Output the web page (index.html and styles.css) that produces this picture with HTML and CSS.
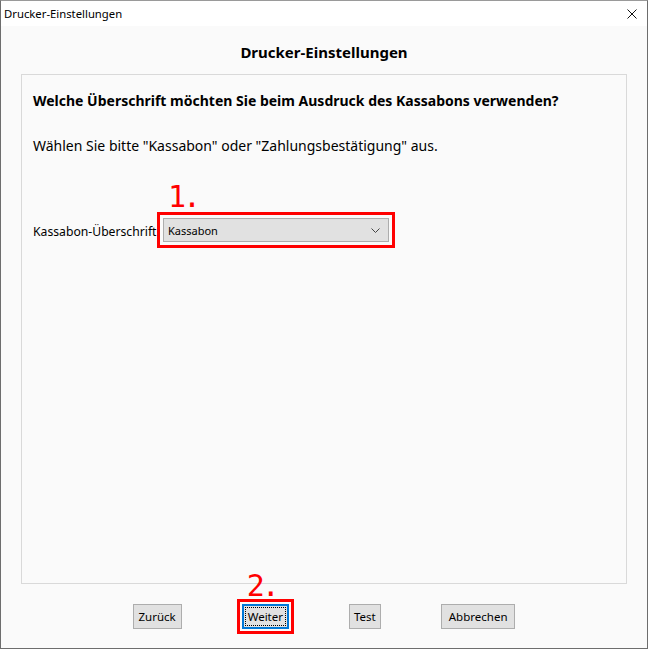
FILE: index.html
```html
<!DOCTYPE html>
<html lang="de">
  <head>
    <meta charset="UTF-8" />
    <meta name="viewport" content="width=device-width, initial-scale=1.0" />
    <title>Drucker-Einstellungen</title>
    <link rel="stylesheet" href="styles.css">
  </head>
  <body>
    <div class="window">
      <!--Title bar-->
      <div class="titlebar">
        <span class="window-title">Drucker-Einstellungen</span>
        <svg class="close-icon" width="10" height="10" viewBox="0 0 10 10">
          <path d="M0.5 0.5 L9.5 9.5 M9.5 0.5 L0.5 9.5" stroke="#111" stroke-width="1" fill="none" />
        </svg>
      </div>

      <div class="content">
        <h1 class="heading">Drucker-Einstellungen</h1>

        <div class="panel">
          <p class="question">Welche Überschrift möchten Sie beim Ausdruck des Kassabons verwenden?</p>
          <p class="hint">Wählen Sie bitte "Kassabon" oder "Zahlungsbestätigung" aus.</p>

          <div class="field-row">
            <label class="field-label" for="receiptTitle">Kassabon-Überschrift</label>
            <div class="combo marked" id="receiptTitle">
              <span class="combo-value">Kassabon</span>
              <svg class="chevron" width="9" height="5" viewBox="0 0 9 5">
                <path d="M0.5 0.5 L4.5 4.5 L8.5 0.5" stroke="#444" stroke-width="1" fill="none" />
              </svg>
              <span class="step step-one">1.</span>
            </div>
          </div>
        </div>

        <!--Buttons-->
        <div class="button-row">
          <button class="btn">Zurück</button>
          <button class="btn btn-default marked">Weiter<span class="step step-two">2.</span></button>
          <button class="btn btn-narrow">Test</button>
          <button class="btn btn-wide">Abbrechen</button>
        </div>
      </div>
    </div>
  </body>
</html>
```

FILE: styles.css
```css
body {
  margin: 0;
  font-family: "Noto Sans", "Open Sans", sans-serif;
  color: #000;
}
.window {
  box-sizing: border-box;
  width: 648px;
  height: 649px;
  border: 1px solid #6d6d6d;
  border-top-color: #9a9a9a;
  background-color: #fafafa;
  display: flex;
  flex-direction: column;
}
/* Title bar */
.titlebar {
  height: 25px;
  background-color: #fff;
  display: flex;
  align-items: center;
  justify-content: space-between;
  padding: 0 10px 0 3px;
}
.window-title {
  font-size: 11.3px;
}
.close-icon {
  margin-top: 1px;
}
/* Dialog body */
.content {
  flex: 1;
  display: flex;
  flex-direction: column;
  padding: 0 20px;
}
.heading {
  margin: 0;
  padding: 16px 0 12px;
  font-size: 15px;
  line-height: 20px;
  font-weight: bold;
  text-align: center;
}
.panel {
  box-sizing: border-box;
  height: 510px;
  border: 1px solid #d9d9d9;
  background-color: #fafafa;
  padding: 16px 11px 0;
}
.question {
  margin: 0;
  font-size: 14px;
  line-height: 20px;
  font-weight: bold;
}
.hint {
  margin: 25px 0 0;
  font-size: 14px;
  line-height: 20px;
}
.field-row {
  display: flex;
  align-items: center;
  margin-top: 62px;
}
.field-label {
  width: 130px;
  font-size: 12.2px;
  white-space: nowrap;
  overflow: visible;
  margin-top: 2px;
}
.combo {
  position: relative;
  box-sizing: border-box;
  width: 226px;
  height: 24px;
  background-color: #e1e1e1;
  border: 1px solid #adadad;
  display: flex;
  align-items: center;
  justify-content: space-between;
  padding: 0 8px 0 4px;
  font-size: 11px;
}
/* Red annotations over the screenshot */
.marked {
  outline: 3px solid #ff0000;
  outline-offset: 3px;
}
.step {
  position: absolute;
  font-family: "DejaVu Sans Mono", monospace;
  font-size: 30px;
  line-height: 30px;
  color: #ff0000;
  letter-spacing: -3px;
}
.step-one {
  left: 4px;
  top: -37px;
}
.step-two {
  left: 3px;
  top: -35px;
}
/* Button row */
.button-row {
  flex: 1;
  display: flex;
  justify-content: center;
  align-items: flex-start;
  gap: 60px;
  padding-top: 20px;
}
.btn {
  position: relative;
  box-sizing: border-box;
  height: 25px;
  padding: 0 5px;
  background-color: #e1e1e1;
  border: 1px solid #adadad;
  font-family: "Noto Sans", "Open Sans", sans-serif;
  font-size: 11.5px;
  color: #000;
}
.btn-narrow {
  padding: 0 4px;
}
.btn-wide {
  padding: 0 7px;
}
.btn-default {
  border: 2px solid #0078d7;
  padding: 0 4px;
}
.btn-default::before {
  content: "";
  position: absolute;
  left: 1px;
  top: 1px;
  right: 1px;
  bottom: 1px;
  border: 1px dotted #000;
}
.btn-default.marked {
  outline-offset: 2px;
}
```
